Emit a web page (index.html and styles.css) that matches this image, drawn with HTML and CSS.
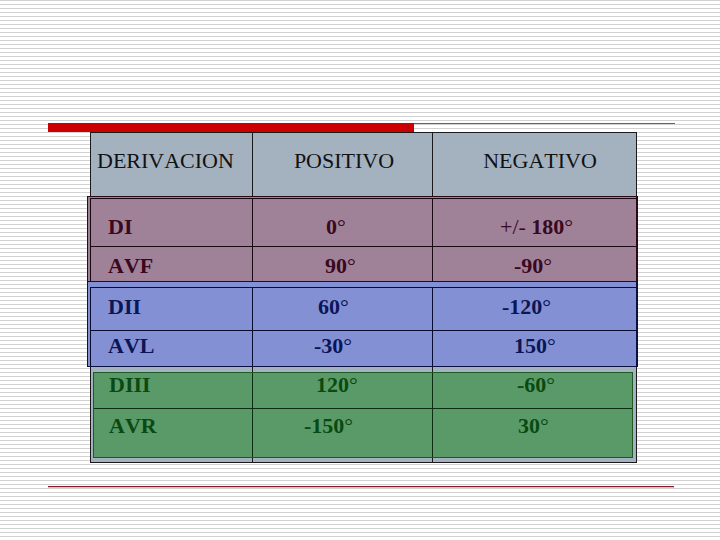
FILE: index.html
```html
<!DOCTYPE html>
<html lang="es">
<head>
<meta charset="utf-8">
<title>Derivaciones</title>
<link rel="stylesheet" href="styles.css">
</head>
<body>
<div class="page">
  <div class="rules">
    <div class="thick"></div>
    <div class="thin"></div>
  </div>
  <div class="sheet">
    <div class="head">
      <div class="h1">DERIVACION</div>
      <div class="h2">POSITIVO</div>
      <div class="h3">NEGATIVO</div>
    </div>
    <div class="group pink">
      <div class="row r-di">
        <div class="c1">DI</div>
        <div class="c2">0<span class="deg">°</span></div>
        <div class="c3"><span class="reg">+/- </span>180<span class="deg">°</span></div>
      </div>
      <div class="row r-avf">
        <div class="c1">AVF</div>
        <div class="c2">90<span class="deg">°</span></div>
        <div class="c3">-90<span class="deg">°</span></div>
      </div>
    </div>
    <div class="group blue">
      <div class="row r-dii">
        <div class="c1">DII</div>
        <div class="c2">60<span class="deg">°</span></div>
        <div class="c3">-120<span class="deg">°</span></div>
      </div>
      <div class="row r-avl">
        <div class="c1">AVL</div>
        <div class="c2">-30<span class="deg">°</span></div>
        <div class="c3">150<span class="deg">°</span></div>
      </div>
    </div>
    <div class="group green">
      <div class="row r-diii">
        <div class="c1">DIII</div>
        <div class="c2">120<span class="deg">°</span></div>
        <div class="c3">-60<span class="deg">°</span></div>
      </div>
      <div class="row r-avr">
        <div class="c1">AVR</div>
        <div class="c2">-150<span class="deg">°</span></div>
        <div class="c3">30<span class="deg">°</span></div>
      </div>
    </div>
  </div>
  <div class="bottom-rule"></div>
</div>
</body>
</html>
```
FILE: styles.css
```css
html {
  background: repeating-linear-gradient(to bottom, #d2d2d2 0px, #d2d2d2 1px, #ffffff 1px, #ffffff 4px);
}
body {
  margin: 0;
  font-family: "Liberation Serif", "Times New Roman", serif;
  font-size: 22px;
  line-height: 22px;
  font-kerning: none;
}
.page {
  width: 720px;
  height: 540px;
  box-sizing: border-box;
  padding-top: 123px;
}
.rules {
  display: flex;
  align-items: flex-start;
  margin-left: 48px;
}
.thick {
  width: 366px;
  height: 9px;
  background: #cc0000;
}
.thin {
  width: 261px;
  height: 1px;
  background: #c23a3a;
}
.sheet {
  margin-left: 90px;
  width: 547px;
  height: 331px;
  box-sizing: border-box;
  border: 1px solid #1a1a1a;
  background-color: #a4b2c0;
  background-image: linear-gradient(to right,
    transparent 161px, #1a1a1a 161px, #1a1a1a 162px,
    transparent 162px, transparent 341px, #1a1a1a 341px, #1a1a1a 342px,
    transparent 342px);
}
.head {
  display: grid;
  grid-template-columns: 161px 180px 1fr;
  height: 63px;
  color: #111111;
  white-space: nowrap;
}
.head > div {
  padding-top: 17px;
}
.h1 { padding-left: 6px; }
.h2 { text-align: center; padding-left: 4px; }
.h3 { text-align: center; padding-left: 12px; }

.group {
  box-sizing: border-box;
  font-weight: bold;
  white-space: nowrap;
}
.row {
  display: grid;
  box-sizing: border-box;
}
.deg { font-weight: normal; }
.reg { font-weight: normal; }

/* pink */
.pink {
  margin-left: -4px;
  width: 551px;
  height: 86px;
  border: 1px solid #2a0a18;
  border-right-width: 2px;
  padding-top: 1px;
  background: #a08298;
  color: #3a0820;
}
.pink .row, .blue .row {
  margin-left: 2px;
  grid-template-columns: 163px 180px 1fr;
}
.pink .c1 { border-left: 1px solid #1a0a14; border-right: 1px solid #1a0a14; padding-left: 17px; }
.pink .c2 { border-right: 1px solid #1a0a14; }
.r-di { height: 49px; border-top: 1px solid #1a0a14; border-bottom: 1px solid #1a0a14; padding-top: 0; }
.r-di > div { padding-top: 17px; }
.r-avf { height: 34px; }
.r-avf > div { padding-top: 8px; }

/* blue */
.blue {
  margin-left: -4px;
  width: 551px;
  height: 85px;
  border: 1px solid #0a1040;
  border-top: 0;
  border-right-width: 2px;
  padding-top: 5px;
  background: #8490d4;
  color: #0a1656;
}
.blue .c1 { border-left: 1px solid #0a0c30; border-right: 1px solid #0a0c30; padding-left: 17px; }
.blue .c2 { border-right: 1px solid #0a0c30; }
.r-dii { height: 44px; border-top: 1px solid #0a0c30; border-bottom: 1px solid #0a0c30; }
.r-dii > div { padding-top: 8px; }
.r-avl { height: 35px; }
.r-avl > div { padding-top: 4px; }

/* green */
.green {
  margin: 5px 0 0 2px;
  width: 540px;
  height: 86px;
  border: 1px solid #1e5a26;
  background: #5a9a68;
  color: #0a4a12;
}
.green .row {
  grid-template-columns: 159px 180px 1fr;
}
.green .c1 { border-right: 1px solid #0e2e12; padding-left: 15px; }
.green .c2 { border-right: 1px solid #0e2e12; }
.r-diii { height: 36px; border-bottom: 1px solid #0e2e12; }
.r-diii > div { padding-top: 1px; }
.r-avr { height: 48px; }
.r-avr > div { padding-top: 6px; }

/* value offsets inside columns */
.r-di .c2 { padding-left: 73px; }
.r-avf .c2 { padding-left: 72px; }
.r-dii .c2 { padding-left: 65px; }
.r-avl .c2 { padding-left: 61px; }
.r-diii .c2 { padding-left: 63px; }
.r-avr .c2 { padding-left: 51px; }

.r-di .c3 { padding-left: 67px; }
.r-avf .c3 { padding-left: 81px; }
.r-dii .c3 { padding-left: 69px; }
.r-avl .c3 { padding-left: 81px; }
.r-diii .c3 { padding-left: 84px; }
.r-avr .c3 { padding-left: 85px; }

.bottom-rule {
  margin: 23px 0 0 48px;
  width: 626px;
  height: 1px;
  background: #8b1a2a;
  border-bottom: 1px solid #e6b8c0;
}
```
